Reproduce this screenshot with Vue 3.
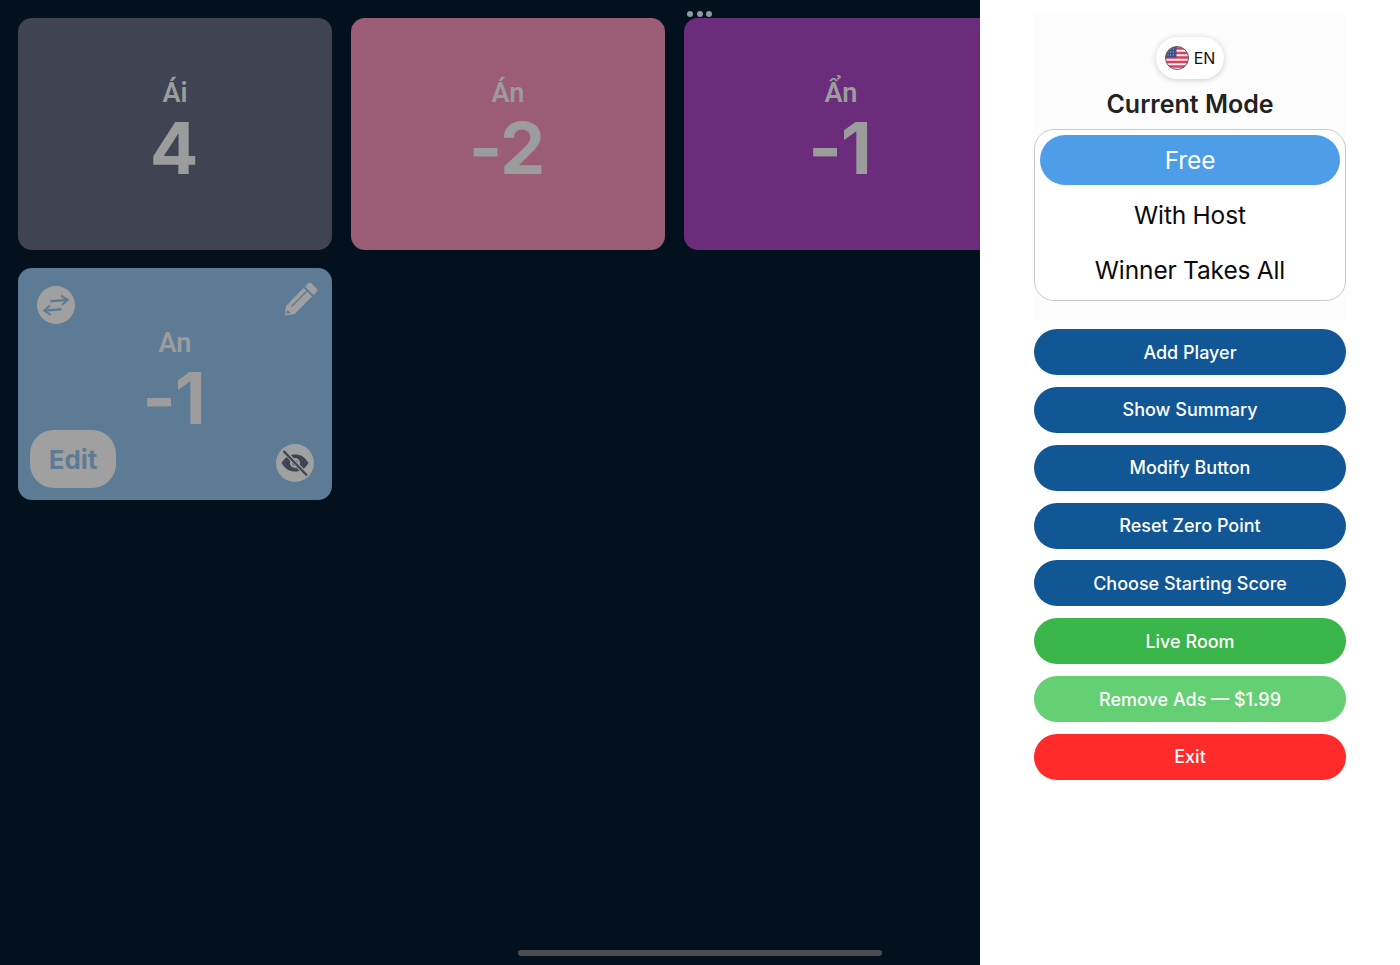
<script setup>
const players = [
  { name: 'Ái', score: '4', color: '#3f4352' },
  { name: 'Án', score: '-2', color: '#9b5d76' },
  { name: 'Ẩn', score: '-1', color: '#6a2c7b' },
  { name: 'An', score: '-1', color: '#5e7b96', tools: true },
]

const modes = ['Free', 'With Host', 'Winner Takes All']

const actions = [
  { label: 'Add Player', color: '#115695' },
  { label: 'Show Summary', color: '#115695' },
  { label: 'Modify Button', color: '#115695' },
  { label: 'Reset Zero Point', color: '#115695' },
  { label: 'Choose Starting Score', color: '#115695' },
  { label: 'Live Room', color: '#39b54a' },
  { label: 'Remove Ads — $1.99', color: '#64cf73' },
  { label: 'Exit', color: '#ff2a2a' },
]
</script>

<template>
  <div class="screen">
    <main class="board">
      <div class="grid">
        <div
          v-for="p in players"
          :key="p.name"
          class="card"
          :style="{ background: p.color }"
        >
          <div class="name">{{ p.name }}</div>
          <div class="score">{{ p.score }}</div>

          <template v-if="p.tools">
            <span class="round swap">
              <svg width="30" height="24" viewBox="0 0 30 24" fill="none" stroke="#5e7b96" stroke-width="2.6">
                <path d="M9 7.500L27 6" />
                <path d="M20.500 1.500L27.500 6L21.500 11.500" stroke-width="2.400" />
                <path d="M21 16L3 17.500" />
                <path d="M8.500 12L2.500 17.500L9.500 22" stroke-width="2.400" />
              </svg>
            </span>
            <svg class="pencil" width="34" height="34" viewBox="0 0 34 34">
              <path d="M24 1.500a2.500 2.500 0 0 1 3.500 0l5 5a2.500 2.500 0 0 1 0 3.500l-3 3-8.500-8.500z" fill="#a0a0a0" />
              <path d="M19.500 6L28 14.500 10.500 32 1 33.500 2 24z" fill="#a0a0a0" />
              <path d="M22.500 9.500L7.500 24.500" stroke="#5e7b96" stroke-width="1.400" />
              <path d="M3.500 28l3 3-4 1z" fill="#5e7b96" />
            </svg>
            <button class="edit">Edit</button>
            <span class="round eye">
              <svg width="30" height="26" viewBox="0 0 30 26">
                <path d="M1.500 13C5 7 9.500 4.500 15 4.500S25 7 28.500 13C25 19 20.500 21.500 15 21.500S5 19 1.500 13z" fill="#3f4352" />
                <circle cx="15" cy="13" r="5" fill="#a0a0a0" />
                <circle cx="15" cy="13" r="2.800" fill="#3f4352" />
                <path d="M4.500 1.500L26 24.500" stroke="#a0a0a0" stroke-width="4.500" />
                <path d="M3.500 1L27 25.500" stroke="#3f4352" stroke-width="2.200" />
              </svg>
            </span>
          </template>
        </div>
      </div>
    </main>

    <aside class="side">
      <div class="panel">
        <div class="lang">
          <svg width="24" height="24" viewBox="0 0 24 24">
            <defs>
              <clipPath id="flag"><circle cx="12" cy="12" r="11.500" /></clipPath>
            </defs>
            <g clip-path="url(#flag)">
              <rect width="24" height="24" fill="#f6eef0" />
              <path d="M0 2.500H24M0 7H24M0 11.500H24M0 16H24M0 20.500H24" stroke="#d9415f" stroke-width="2.300" />
              <rect width="11.500" height="11.500" fill="#3d4f86" />
              <path d="M2.500 3h8M2.500 6h8M2.500 9h8" stroke="#c9cfe4" stroke-width="1" stroke-dasharray="1 1.600" />
            </g>
            <circle cx="12" cy="12" r="11.500" fill="none" stroke="#5b5a70" stroke-width="1" />
          </svg>
          <span>EN</span>
        </div>

        <h2 class="title">Current Mode</h2>

        <div class="modes">
          <div
            v-for="(m, i) in modes"
            :key="m"
            class="mode"
            :class="{ active: i === 0 }"
          >{{ m }}</div>
        </div>
      </div>

      <div class="actions">
        <button
          v-for="a in actions"
          :key="a.label"
          class="action"
          :style="{ background: a.color }"
        >{{ a.label }}</button>
      </div>
    </aside>

    <div class="dots"><i></i><i></i><i></i></div>
    <div class="home-bar"></div>
  </div>
</template>

<style scoped>
.screen {
  position: relative;
  display: flex;
  width: 1400px;
  height: 965px;
  overflow: hidden;
  font-family: Inter, "Liberation Sans", sans-serif;
}

.board {
  width: 980px;
  flex-shrink: 0;
  overflow: hidden;
  background: #02111d;
  padding: 18px 0 0 18px;
  box-sizing: border-box;
}

.grid {
  display: grid;
  grid-template-columns: repeat(3, 314px);
  grid-auto-rows: 232px;
  column-gap: 19px;
  row-gap: 18px;
}

.card {
  position: relative;
  border-radius: 14px;
  display: flex;
  flex-direction: column;
  align-items: center;
  padding-top: 58px;
  box-sizing: border-box;
  color: #9c9c9c;
}

.name {
  font-family: Roboto, Inter, sans-serif;
  font-size: 27px;
  font-weight: 600;
  line-height: 34px;
}

.score {
  font-family: Inter, Roboto, sans-serif;
  font-size: 72px;
  font-weight: 700;
  line-height: 76px;
  letter-spacing: -1px;
  padding-right: 3px;
}

.round {
  position: absolute;
  width: 38px;
  height: 38px;
  border-radius: 50%;
  background: #a0a0a0;
  display: flex;
  align-items: center;
  justify-content: center;
}

.swap {
  left: 19px;
  top: 18px;
}

.swap svg {
  width: 28px;
  height: 23px;
}

.eye {
  right: 18px;
  bottom: 18px;
}

.pencil {
  position: absolute;
  right: 14px;
  top: 14px;
}

.edit {
  position: absolute;
  left: 12px;
  bottom: 12px;
  width: 86px;
  height: 58px;
  border: 0;
  border-radius: 24px;
  background: #a0a0a0;
  color: #5e7b96;
  font-family: Inter, sans-serif;
  font-size: 26px;
  font-weight: 700;
  padding: 0;
}

.side {
  flex: 1;
  background: #fff;
  display: flex;
  flex-direction: column;
  align-items: center;
  padding: 14px 54px 0;
  box-sizing: border-box;
}

.panel {
  width: 312px;
  padding: 23px 0 19px;
  background: #fdfdfd;
  display: flex;
  flex-direction: column;
  align-items: center;
}

.lang {
  display: flex;
  align-items: center;
  gap: 5px;
  height: 42px;
  padding: 0 9px;
  border-radius: 21px;
  background: #fff;
  box-shadow: 0 1px 6px rgba(0, 0, 0, 0.2);
  font-size: 16px;
  color: #111;
}

.title {
  margin: 10px 0;
  font-size: 25px;
  line-height: 30px;
  font-weight: 600;
  color: #222;
}

.modes {
  width: 312px;
  box-sizing: border-box;
  background: #fff;
  border: 1px solid #c9c9c9;
  border-radius: 20px;
  padding: 5px;
  display: flex;
  flex-direction: column;
  gap: 5px;
}

.mode {
  height: 50px;
  border-radius: 25px;
  display: flex;
  align-items: center;
  justify-content: center;
  font-size: 24.5px;
  letter-spacing: -0.1px;
  word-spacing: -0.5px;
  color: #0a0a0a;
}

.mode.active {
  background: #4d9de9;
  color: #fff;
}

.actions {
  width: 312px;
  margin-top: 9px;
  display: flex;
  flex-direction: column;
  gap: 11.85px;
}

.action {
  height: 46px;
  border: 0;
  border-radius: 23px;
  color: #fff;
  font-family: Inter, sans-serif;
  font-size: 18px;
  font-weight: 500;
}

.dots {
  position: absolute;
  left: 687px;
  top: 11px;
  display: flex;
  gap: 3.5px;
}

.dots i {
  width: 6px;
  height: 6px;
  border-radius: 50%;
  background: #8c98a3;
}

.home-bar {
  position: absolute;
  left: 518px;
  top: 950px;
  width: 364px;
  height: 6px;
  border-radius: 3px;
  background: #4a4d50;
}
</style>
